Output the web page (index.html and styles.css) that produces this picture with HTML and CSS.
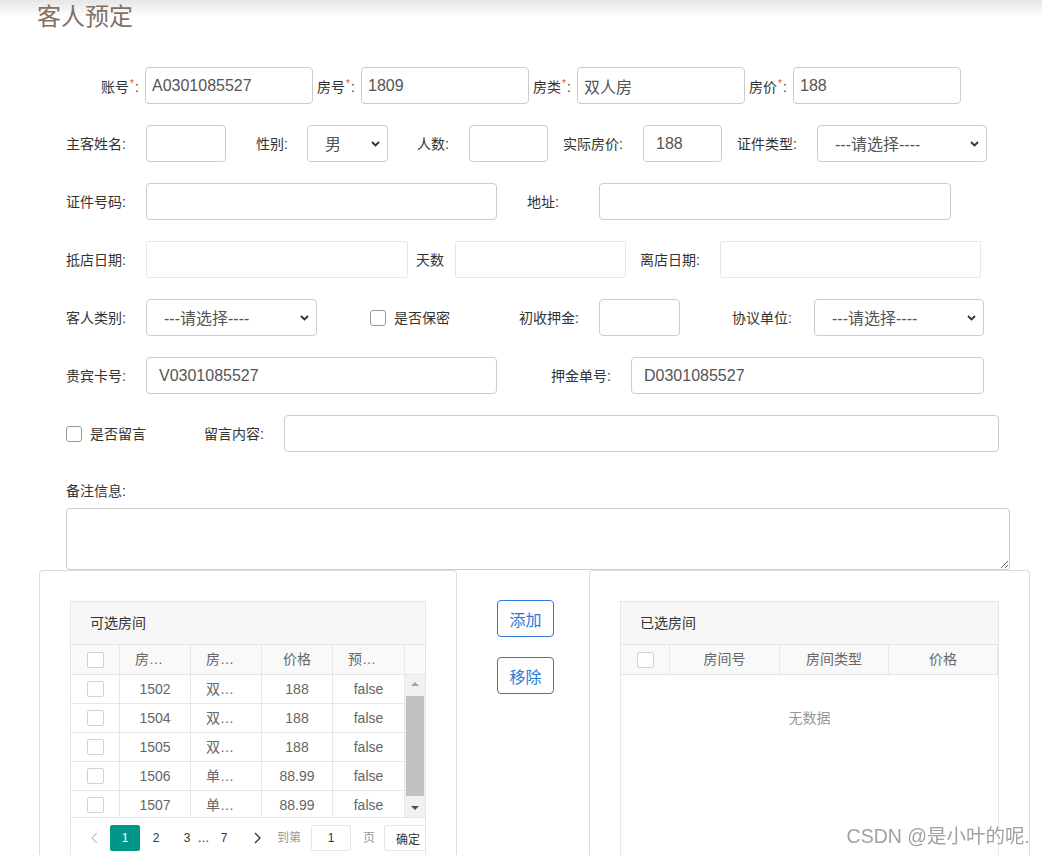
FILE: index.html
```html
<!DOCTYPE html>
<html lang="zh-CN">
<head>
<meta charset="utf-8">
<title>客人预定</title>
<link rel="stylesheet" href="styles.css">
</head>
<body>
<h1 class="title">客人预定</h1>
<form class="form">
  <div class="row r1">
    <label class="lb lb-r1">账号<span class="star">*</span>:</label><input class="in w168" value="A0301085527">
    <label class="lb lb-r1">房号<span class="star">*</span>:</label><input class="in w168" value="1809">
    <label class="lb lb-r1">房类<span class="star">*</span>:</label><input class="in w168" value="双人房">
    <label class="lb lb-r1">房价<span class="star">*</span>:</label><input class="in w168" value="188">
  </div>

  <div class="row">
    <label class="lb">主客姓名:</label><input class="in w80" value="">
    <label class="lb lw51 ml30">性别:</label>
    <span class="sel w81"><select><option>男</option><option>女</option></select><svg viewBox="0 0 9 6"><path d="M1 1l3.5 3.5L8 1"/></svg></span>
    <label class="lb lw52 ml29">人数:</label><input class="in w79" value="">
    <label class="lb ml15">实际房价:</label><input class="in w79" value="188">
    <label class="lb ml15">证件类型:</label>
    <span class="sel w170"><select><option>---请选择----</option></select><svg viewBox="0 0 9 6"><path d="M1 1l3.5 3.5L8 1"/></svg></span>
  </div>

  <div class="row">
    <label class="lb">证件号码:</label><input class="in w351" value="">
    <label class="lb lw72 ml30">地址:</label><input class="in w352" value="">
  </div>

  <div class="row">
    <label class="lb">抵店日期:</label><input class="in lt w262" value="">
    <label class="lb lw39 ml8">天数</label><input class="in lt w171" value="">
    <label class="lb ml14">离店日期:</label><input class="in lt w261" value="">
  </div>

  <div class="row">
    <label class="lb">客人类别:</label>
    <span class="sel w171"><select><option>---请选择----</option></select><svg viewBox="0 0 9 6"><path d="M1 1l3.5 3.5L8 1"/></svg></span>
    <input type="checkbox" class="cb ml53"><span class="cbt">是否保密</span>
    <label class="lb ml69">初收押金:</label><input class="in w81" value="">
    <label class="lb lw82 ml52">协议单位:</label>
    <span class="sel w170"><select><option>---请选择----</option></select><svg viewBox="0 0 9 6"><path d="M1 1l3.5 3.5L8 1"/></svg></span>
  </div>

  <div class="row">
    <label class="lb">贵宾卡号:</label><input class="in w351" value="V0301085527">
    <label class="lb ml54">押金单号:</label><input class="in w353" value="D0301085527">
  </div>

  <div class="row">
    <input type="checkbox" class="cb"><span class="cbt">是否留言</span>
    <label class="lb ml58">留言内容:</label><input class="in w715" value="">
  </div>

  <div class="note-label">备注信息:</div>
  <textarea class="remark"></textarea>

  <div class="transfer">
    <div class="panel pl">
      <div class="tbl">
        <div class="tbl-title">可选房间</div>
        <div class="thead">
          <div class="td c0"><span class="tcb"></span></div>
          <div class="td c1">房间号</div>
          <div class="td c2">房间类型</div>
          <div class="td c3">价格</div>
          <div class="td c4">预定状态</div>
          <div class="patch"></div>
        </div>
        <div class="tbody">
          <div class="rows">
            <div class="tr"><div class="td c0"><span class="tcb"></span></div><div class="td c1">1502</div><div class="td c2">双人房</div><div class="td c3">188</div><div class="td c4">false</div></div>
            <div class="tr"><div class="td c0"><span class="tcb"></span></div><div class="td c1">1504</div><div class="td c2">双人房</div><div class="td c3">188</div><div class="td c4">false</div></div>
            <div class="tr"><div class="td c0"><span class="tcb"></span></div><div class="td c1">1505</div><div class="td c2">双人房</div><div class="td c3">188</div><div class="td c4">false</div></div>
            <div class="tr"><div class="td c0"><span class="tcb"></span></div><div class="td c1">1506</div><div class="td c2">单人房</div><div class="td c3">88.99</div><div class="td c4">false</div></div>
            <div class="tr"><div class="td c0"><span class="tcb"></span></div><div class="td c1">1507</div><div class="td c2">单人房</div><div class="td c3">88.99</div><div class="td c4">false</div></div>
          </div>
          <div class="sbar">
            <div class="sbtn"><svg viewBox="0 0 8 5"><path class="up" d="M0 5L4 1 8 5z"/></svg></div>
            <div class="thumb"></div>
            <div class="sbtn down"><svg viewBox="0 0 8 5"><path class="dn" d="M0 0h8L4 4z"/></svg></div>
          </div>
        </div>
        <div class="pager">
          <span class="pg dis"><svg viewBox="0 0 7 12"><path d="M6 1L1 6l5 5"/></svg></span>
          <span class="pg on">1</span>
          <span class="pg">2</span>
          <span class="pg">3</span>
          <span class="pg ell">…</span>
          <span class="pg">7</span>
          <span class="pg nx"><svg viewBox="0 0 7 12"><path d="M1 1l5 5-5 5"/></svg></span>
          <span class="skip">到第</span>
          <input class="skip-in" value="1">
          <span class="skip pg-unit">页</span>
          <button type="button" class="skip-btn">确定</button>
        </div>
      </div>
    </div>

    <div class="ops">
      <button type="button" class="btn">添加</button>
      <button type="button" class="btn">移除</button>
    </div>

    <div class="panel pr">
      <div class="tbl">
        <div class="tbl-title">已选房间</div>
        <div class="thead">
          <div class="td c0"><span class="tcb"></span></div>
          <div class="td r1c">房间号</div>
          <div class="td r2c">房间类型</div>
          <div class="td r3c">价格</div>
        </div>
        <div class="none">无数据</div>
      </div>
    </div>
  </div>
</form>
<div class="wm">CSDN @是小叶的呢.</div>
</body>
</html>
```
FILE: styles.css
```css
html, body {
  margin: 0;
  height: 100%;
  overflow: hidden;
}
body {
  font-family: "Liberation Sans", "Noto Sans CJK SC", sans-serif;
  font-size: 14px;
  color: #333;
  background: #fff linear-gradient(to bottom, #e6e6e6 0, #fff 17px) no-repeat;
}
.title {
  margin: 0;
  padding: 5px 0 0 37px;
  font-size: 24px;
  line-height: 24px;
  font-weight: normal;
  color: #84705f;
}
.form {
  padding-top: 38px;
}
.row {
  display: flex;
  align-items: center;
  height: 37px;
  margin-bottom: 21px;
  padding-left: 66px;
}
.row.r1 {
  padding-left: 97px;
}
.lb {
  flex: none;
  width: 80px;
  line-height: 20px;
  white-space: nowrap;
  color: #333;
}
.lb-r1 {
  width: 44px;
  margin-left: 4px;
  margin-top: 2px;
}
.star {
  color: #d9534f;
  font-size: 10px;
  vertical-align: top;
  position: relative;
  top: -3px;
  margin: 0 1px;
}

.in {
  flex: none;
  box-sizing: border-box;
  height: 37px;
  margin: 0;
  border: 1px solid #ccc;
  border-radius: 4px;
  padding: 0 12px;
  font: 16px "Liberation Sans", "Noto Sans CJK SC", sans-serif;
  color: #555;
  background: #fff;
  outline: none;
}
.r1 .in { padding: 0 6px; }
.in.lt {
  border-color: #e8e8e8;
  border-radius: 2px;
}

.sel {
  flex: none;
  position: relative;
  display: block;
  height: 37px;
}
.sel select {
  -webkit-appearance: none;
  appearance: none;
  box-sizing: border-box;
  width: 100%;
  height: 37px;
  margin: 0;
  border: 1px solid #ccc;
  border-radius: 4px;
  padding: 2px 0 0 17px;
  font: 16px "Liberation Sans", "Noto Sans CJK SC", sans-serif;
  color: #555;
  background: #fff;
  outline: none;
}
.sel svg {
  position: absolute;
  right: 8px;
  top: 16px;
  width: 9px;
  height: 6px;
  pointer-events: none;
}
.sel svg path {
  fill: none;
  stroke: #333;
  stroke-width: 1.9;
}

.cb {
  -webkit-appearance: none;
  appearance: none;
  flex: none;
  box-sizing: border-box;
  width: 16px;
  height: 16px;
  margin: 0;
  border: 1px solid #9a9a9a;
  border-radius: 3px;
  background: #fff;
}
.cbt {
  margin-left: 8px;
  line-height: 20px;
  white-space: nowrap;
}

/* sizing and spacing helpers (after component rules so they win) */
.lw39 { width: 39px; }
.lw51 { width: 51px; }
.lw52 { width: 52px; }
.lw72 { width: 72px; }
.lw82 { width: 82px; }
.ml8 { margin-left: 8px; }
.ml14 { margin-left: 14px; }
.ml15 { margin-left: 15px; }
.ml29 { margin-left: 29px; }
.ml30 { margin-left: 30px; }
.ml52 { margin-left: 52px; }
.ml53 { margin-left: 53px; }
.ml54 { margin-left: 54px; }
.ml58 { margin-left: 58px; }
.ml69 { margin-left: 69px; }
.w79 { width: 79px; }
.w80 { width: 80px; }
.w81 { width: 81px; }
.w168 { width: 168px; }
.w170 { width: 170px; }
.w171 { width: 171px; }
.w261 { width: 261px; }
.w262 { width: 262px; }
.w351 { width: 351px; }
.w352 { width: 352px; }
.w353 { width: 353px; }
.w715 { width: 715px; }

.note-label {
  padding-left: 66px;
  margin-top: 29px;
  line-height: 20px;
  margin-bottom: 7px;
}
.remark {
  display: block;
  box-sizing: border-box;
  width: 944px;
  height: 62px;
  margin: 0 0 0 66px;
  border: 1px solid #ccc;
  border-radius: 4px;
  resize: vertical;
  outline: none;
}

.transfer {
  display: flex;
  align-items: flex-start;
  padding-left: 39px;
}
.panel {
  flex: none;
  box-sizing: border-box;
  height: 285px;
  padding: 30px 30px 0;
  border: 1px solid #ddd;
  border-bottom: 0;
  border-radius: 4px 4px 0 0;
  display: flex;
  flex-direction: column;
}
.pl { width: 418px; }
.pr { width: 441px; }
.ops {
  flex: none;
  width: 57px;
  margin: 0 35px 0 40px;
  padding-top: 30px;
  display: flex;
  flex-direction: column;
  gap: 20px;
}
.btn {
  box-sizing: border-box;
  height: 37px;
  width: 57px;
  padding: 0;
  border: 1px solid #2b7ad8;
  border-radius: 4px;
  background: #fff;
  color: #2b7ad8;
  font: 16px "Liberation Sans", "Noto Sans CJK SC", sans-serif;
}

.tbl {
  flex: 1;
  border: 1px solid #e6e6e6;
  border-bottom: 0;
  overflow: hidden;
  display: flex;
  flex-direction: column;
}
.tbl-title {
  flex: none;
  height: 42px;
  line-height: 42px;
  padding-left: 19px;
  background: #f7f7f7;
  border-bottom: 1px solid #e6e6e6;
  color: #333;
}
.thead {
  flex: none;
  display: flex;
  height: 29px;
  background: #f9f9f9;
  border-bottom: 1px solid #e6e6e6;
}
.thead .td { line-height: 29px; }
.td {
  flex: none;
  box-sizing: border-box;
  border-right: 1px solid #e6e6e6;
  padding: 0 15px;
  text-align: center;
  white-space: nowrap;
  overflow: hidden;
  text-overflow: ellipsis;
  line-height: 28px;
  color: #666;
}
.c0 {
  width: 49px;
  padding: 0;
  display: flex;
  align-items: center;
  justify-content: center;
}
.c1, .c2, .c3 { width: 71px; }
.c4 { width: 72px; }
.r1c { width: 110px; }
.r2c, .r3c { width: 109px; }
.patch {
  flex: 1;
}
.tcb {
  display: block;
  box-sizing: border-box;
  width: 17px;
  height: 16px;
  border: 1px solid #d2d2d2;
  border-radius: 2px;
  background: #fff;
}
.tbody {
  flex: none;
  display: flex;
  height: 142px;
  overflow: hidden;
}
.rows {
  width: 334px;
  flex: none;
}
.tr {
  display: flex;
  height: 28px;
  border-bottom: 1px solid #e6e6e6;
}
.sbar {
  flex: 1;
  display: flex;
  flex-direction: column;
  align-items: center;
  background: #f1f1f1;
}
.sbtn {
  height: 17px;
  width: 100%;
  display: flex;
  align-items: center;
  justify-content: center;
}
.sbtn svg {
  width: 8px;
  height: 5px;
}
.sbtn .up { fill: #a3a3a3; }
.sbtn .dn { fill: #505050; }
.sbtn.down {
  margin-top: auto;
}
.thumb {
  margin-top: 4px;
  width: 18px;
  height: 100px;
  background: #c1c1c1;
}
.pager {
  flex: 1;
  display: flex;
  align-items: flex-start;
  box-sizing: border-box;
  border-top: 1px solid #e6e6e6;
  padding: 7px 0 0 8px;
  font-size: 12px;
}
.pg {
  flex: none;
  width: 30px;
  height: 26px;
  line-height: 26px;
  margin-right: 1px;
  text-align: center;
  color: #333;
  border-radius: 2px;
  display: flex;
  align-items: center;
  justify-content: center;
}
.pg svg {
  width: 7px;
  height: 12px;
}
.pg svg path {
  fill: none;
  stroke: #333;
  stroke-width: 1.3;
}
.pg.dis svg path { stroke: #c8c8c8; }
.pg.on {
  background: #009688;
  color: #fff;
}
.pg.ell {
  width: 9px;
  margin-left: -4px;
  align-items: flex-start;
}
.pg.nx { margin-left: 2px; }
.skip {
  flex: none;
  margin-left: 4px;
  line-height: 26px;
  color: #999;
}
.skip.pg-unit { margin-left: 12px; }
.skip-in {
  flex: none;
  box-sizing: border-box;
  width: 40px;
  height: 26px;
  margin: 0 0 0 10px;
  padding: 0;
  border: 1px solid #e6e6e6;
  border-radius: 2px;
  text-align: center;
  font: 12px "Liberation Sans", "Noto Sans CJK SC", sans-serif;
  color: #333;
  outline: none;
}
.skip-btn {
  flex: none;
  height: 26px;
  margin-left: 9px;
  padding: 0 11px;
  border: 1px solid #e6e6e6;
  border-radius: 2px;
  background: #fff;
  font: 12px "Liberation Sans", "Noto Sans CJK SC", sans-serif;
  color: #333;
}
.none {
  padding: 30px 0;
  line-height: 26px;
  text-align: center;
  color: #999;
}
.wm {
  position: fixed;
  right: 12px;
  bottom: 7px;
  font-size: 19.5px;
  line-height: 24px;
  color: #a2a2a2;
  text-shadow: 0 0 1px #fff;
  white-space: nowrap;
}
```
